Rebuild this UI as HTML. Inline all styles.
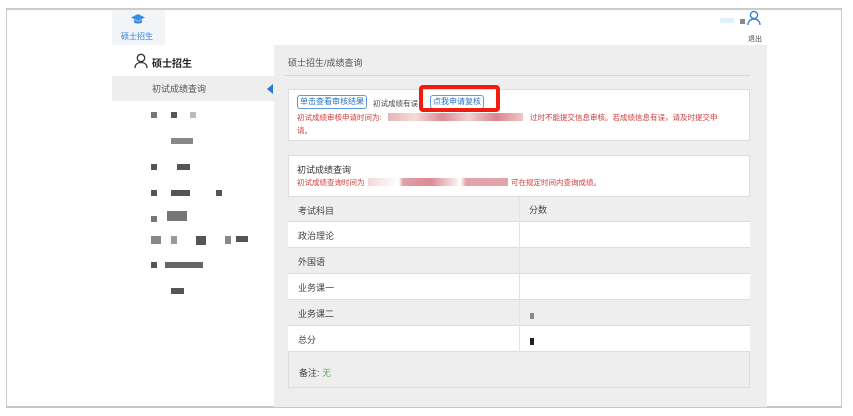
<!DOCTYPE html>
<html><head><meta charset="utf-8"><style>
*{margin:0;padding:0;box-sizing:border-box}
body{width:853px;height:416px;background:#fff;position:relative;overflow:hidden;font-family:"Liberation Sans","Noto Sans CJK SC",sans-serif;font-size:9px;color:#333}
.a{position:absolute}
.sq{position:absolute;background:#555}
.row{position:absolute;left:288px;width:462px;height:26px;border-bottom:1px solid #ddd}
.row span{position:absolute;left:10px;top:7px;font-size:9px;color:#444}
</style></head><body>
<div class="a" style="left:6px;top:8px;width:836px;height:400px;border:1px solid #ccc;border-top:2px solid #ccc;border-bottom:2px solid #c8c8c8"></div>
<div class="a" style="left:112px;top:10px;width:53px;height:35px;background:#f2f4f7"></div>
<svg class="a" style="left:130px;top:13px" width="16" height="12" viewBox="0 0 16 12"><path d="M8 1L1 4.5 8 8 15 4.5z" fill="#3a8ee6"/><path d="M4 6.5v3c2 1.5 6 1.5 8 0v-3L8 8.5z" fill="#3a8ee6"/></svg>
<div class="a" style="left:121px;top:31px;font-size:8px;color:#3a7fd0">硕士招生</div>
<div class="a" style="left:720px;top:18px;width:14px;height:5px;background:#dff2fb"></div>
<div class="a" style="left:740px;top:19px;width:5px;height:5px;background:#889"></div>
<svg class="a" style="left:746px;top:10px" width="16" height="16" viewBox="0 0 16 16"><circle cx="8" cy="5" r="3.6" fill="none" stroke="#3a7fd0" stroke-width="1.4"/><path d="M2 15c0-4 3-6 6-6s6 2 6 6" fill="none" stroke="#3a7fd0" stroke-width="1.4"/></svg>
<div class="a" style="left:748px;top:34px;font-size:7px;color:#444">退出</div>
<svg class="a" style="left:134px;top:53px" width="14" height="15" viewBox="0 0 14 15"><circle cx="7" cy="5" r="3.7" fill="none" stroke="#333" stroke-width="1.3"/><path d="M1 15c0-4 3-5.5 6-5.5s6 1.5 6 5.5" fill="none" stroke="#333" stroke-width="1.3"/></svg>
<div class="a" style="left:152px;top:55px;font-size:10px;color:#222;font-weight:bold">硕士招生</div>
<div class="a" style="left:112px;top:76px;width:162px;height:25px;background:#eee"></div>
<div class="a" style="left:152px;top:82px;font-size:9px;color:#555">初试成绩查询</div>
<div class="a" style="left:267px;top:84px;width:0;height:0;border-top:5px solid transparent;border-bottom:5px solid transparent;border-right:6px solid #2a78d8"></div>
<div class="sq" style="left:151px;top:112px;width:6px;height:6px;background:#777"></div>
<div class="sq" style="left:171px;top:112px;width:6px;height:6px"></div>
<div class="sq" style="left:190px;top:112px;width:6px;height:6px;background:#bbb"></div>
<div class="sq" style="left:171px;top:138px;width:22px;height:6px;background:#888"></div>
<div class="sq" style="left:151px;top:164px;width:6px;height:6px"></div>
<div class="sq" style="left:177px;top:164px;width:13px;height:6px"></div>
<div class="sq" style="left:151px;top:190px;width:6px;height:6px"></div>
<div class="sq" style="left:171px;top:190px;width:19px;height:6px"></div>
<div class="sq" style="left:216px;top:190px;width:6px;height:6px"></div>
<div class="sq" style="left:151px;top:216px;width:6px;height:6px;background:#777"></div>
<div class="sq" style="left:167px;top:211px;width:20px;height:10px;background:#777"></div>
<div class="sq" style="left:151px;top:236px;width:10px;height:8px;background:#888"></div>
<div class="sq" style="left:171px;top:236px;width:6px;height:8px;background:#999"></div>
<div class="sq" style="left:196px;top:236px;width:10px;height:9px"></div>
<div class="sq" style="left:225px;top:236px;width:6px;height:8px;background:#888"></div>
<div class="sq" style="left:236px;top:236px;width:12px;height:6px"></div>
<div class="sq" style="left:151px;top:262px;width:6px;height:6px"></div>
<div class="sq" style="left:165px;top:262px;width:38px;height:6px;background:#666"></div>
<div class="sq" style="left:171px;top:288px;width:13px;height:6px"></div>
<div class="a" style="left:274px;top:45px;width:493px;height:362px;background:#eee"></div>
<div class="a" style="left:288px;top:56px;font-size:9px;color:#555">硕士招生/成绩查询</div>
<div class="a" style="left:285px;top:75px;width:465px;height:1px;background:#d8d8d8"></div>
<div class="a" style="left:288px;top:89px;width:462px;height:52px;background:#fff;border:1px solid #ddd"></div>
<div class="a" style="left:297px;top:95px;height:14px;padding:0 2px;border:1px solid #5b9be0;border-radius:3px;color:#2a70c8;font-size:8px;line-height:12px">单击查看审核结果</div>
<div class="a" style="left:373px;top:98px;font-size:7.5px;color:#444">初试成绩有误</div>
<div class="a" style="left:430px;top:95px;height:14px;padding:0 2px;border:1px solid #5b9be0;border-radius:3px;color:#2a70c8;font-size:8px;line-height:12px">点我申请复核</div>
<div class="a" style="left:419px;top:85px;width:81px;height:27px;border:4px solid #f01c10;border-radius:4px"></div>
<div class="a" style="left:297px;top:112px;font-size:7.5px;color:#d03a3a">初试成绩审核申请时间为:</div>
<div class="a" style="left:388px;top:113px;width:135px;height:8px;background:linear-gradient(90deg,#e7b5b8,#f5dada 20%,#dc8c92 40%,#f2d0d2 60%,#d9858b 80%,#f0c8ca)"></div>
<div class="a" style="left:530px;top:112px;font-size:7.5px;color:#d03a3a">过时不能提交信息审核。若成绩信息有误，请及时提交申</div>
<div class="a" style="left:297px;top:125px;font-size:7.5px;color:#d03a3a">请。</div>
<div class="a" style="left:288px;top:155px;width:462px;height:233px;background:#fff;border:1px solid #ddd"></div>
<div class="a" style="left:297px;top:163px;font-size:9px;color:#333">初试成绩查询</div>
<div class="a" style="left:297px;top:177px;font-size:7.5px;color:#d03a3a">初试成绩查询时间为</div>
<div class="a" style="left:368px;top:178px;width:140px;height:8px;background:linear-gradient(90deg,#f5d8da,#fff 22%,#e0a0a5 25%,#dc8c92 45%,#f5d8da 60%,#fff 66%,#e3a3a8 70%,#e3a3a8 100%)"></div>
<div class="a" style="left:511px;top:177px;font-size:7.5px;color:#d03a3a">可在规定时间内查询成绩。</div>
<div class="row" style="top:196px;background:#eee;border-top:1px solid #ddd"><span>考试科目</span></div>
<div class="row" style="top:222px;background:#fff"><span>政治理论</span></div>
<div class="row" style="top:248px;background:#eee"><span>外国语</span></div>
<div class="row" style="top:274px;background:#fff"><span>业务课一</span></div>
<div class="row" style="top:300px;background:#eee"><span>业务课二</span></div>
<div class="row" style="top:326px;background:#fff"><span>总分</span></div>
<div class="row" style="top:352px;height:36px;background:#eee;border-left:1px solid #ddd;border-right:1px solid #ddd"><span style="top:14px">备注: <b style="font-weight:normal;color:#6a6">无</b></span></div>
<div class="a" style="left:519px;top:196px;width:1px;height:156px;background:#e2e2e2"></div>
<div class="a" style="left:529px;top:203px;font-size:9px;color:#444">分数</div>
<div class="a" style="left:530px;top:313px;width:4px;height:6px;background:#888"></div>
<div class="a" style="left:530px;top:338px;width:4px;height:7px;background:#222"></div>
</body></html>
